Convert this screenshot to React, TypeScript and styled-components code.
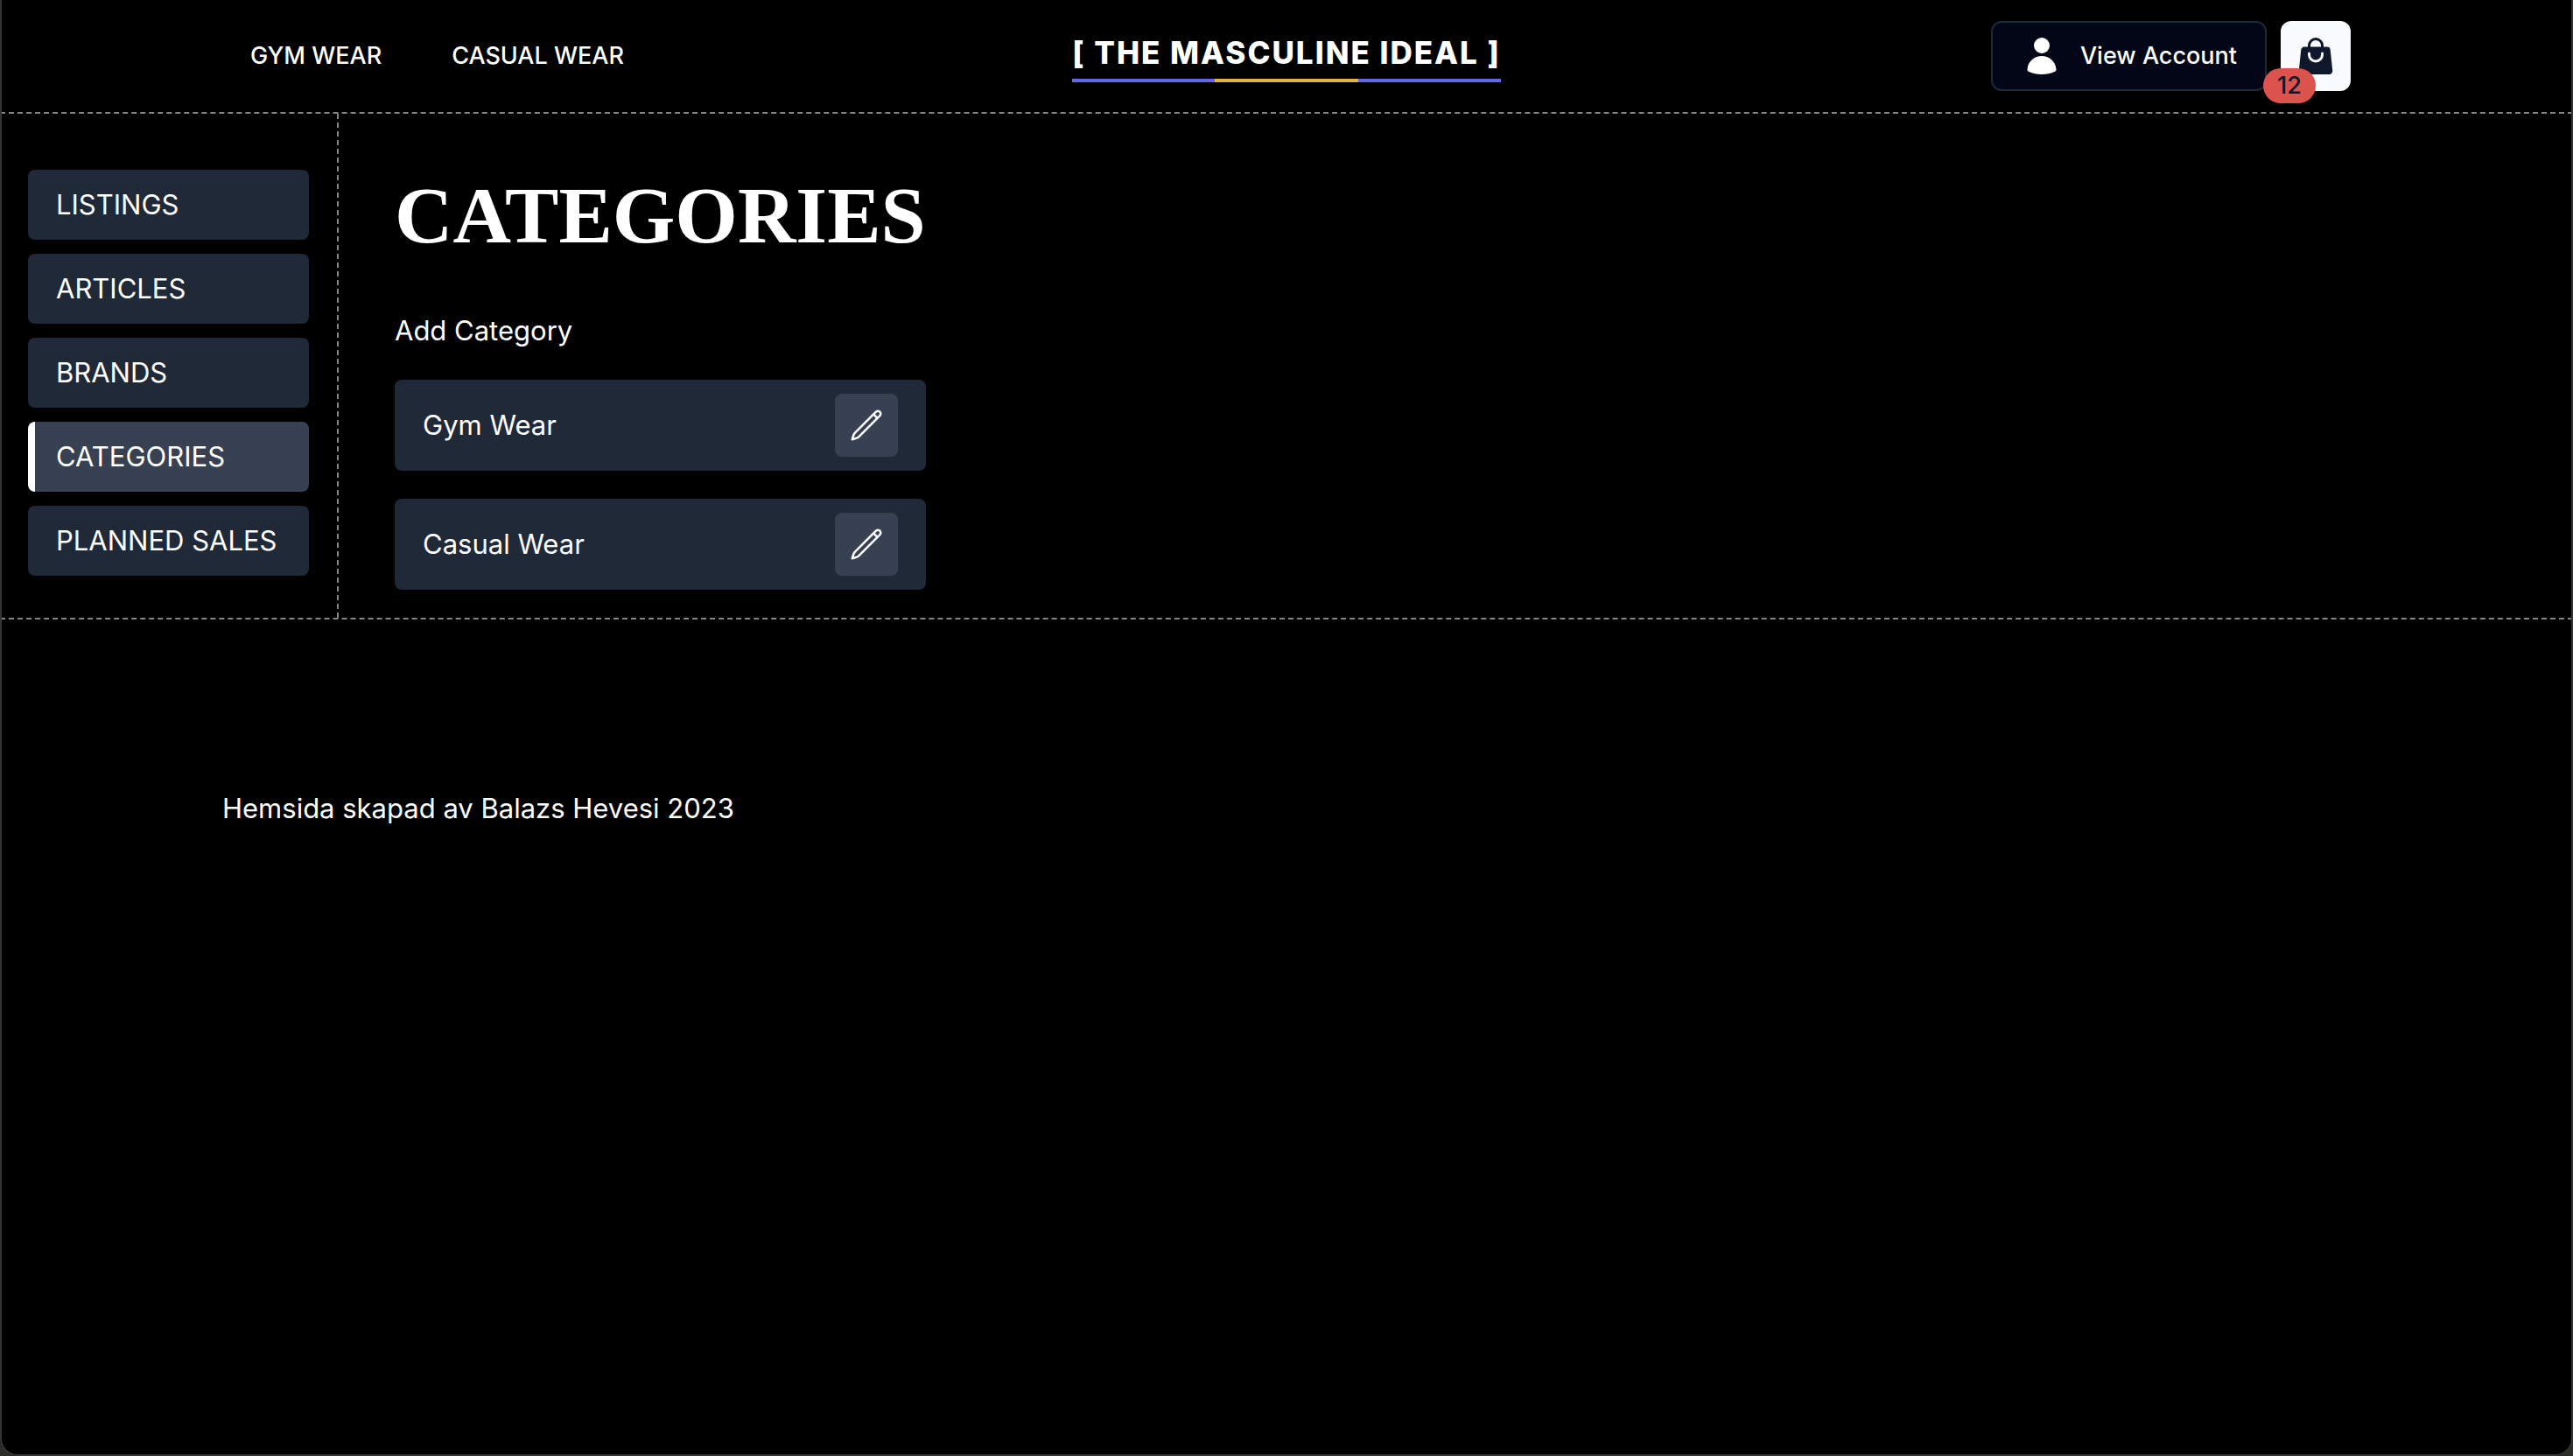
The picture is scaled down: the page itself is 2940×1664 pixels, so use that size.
import React from "react";
import styled, { createGlobalStyle } from "styled-components";

const Global = createGlobalStyle`
  *, *::before, *::after { box-sizing: border-box; }
  html { background: #000; }
  body { margin: 0; color: #fff; font-family: Inter, "Liberation Sans", sans-serif; font-size: 31px; line-height: 48px; }
  h1, p, ul { margin: 0; padding: 0; }
  ul { list-style: none; }
  a { color: inherit; text-decoration: none; }
  button { font: inherit; cursor: pointer; }
`;

const line = "2px dashed #858585";

const WindowFrame = styled.div`
  position: fixed;
  inset: 0;
  border: 2px solid #363636;
  border-top: 0;
  border-radius: 0 0 20px 20px;
  box-shadow: 0 0 0 20px #2c2c28;
  pointer-events: none;
`;

const Header = styled.header`
  border-bottom: ${line};
`;

const Container = styled.div`
  max-width: 2560px;
  margin: 0 auto;
  padding: 0 64px;
`;

const HeaderRow = styled(Container)`
  display: grid;
  grid-template-columns: 1fr auto 1fr;
  align-items: center;
  height: 128px;
`;

const Nav = styled.nav`
  display: flex;
  gap: 16px;
`;

const NavLink = styled.a`
  padding: 16px 32px;
  font-size: 27px;
  font-weight: 500;
`;

const Logo = styled.a`
  display: flex;
  flex-direction: column;
  gap: 4px;
  font-size: 35px;
  line-height: 52px;
  font-weight: 800;
  letter-spacing: 2px;
  white-space: nowrap;
`;

const LogoBar = styled.span`
  height: 4px;
  background: linear-gradient(to right, #6466e9 33.33%, #e3b341 33.33% 66.66%, #6466e9 66.66%);
`;

const Actions = styled.div`
  display: flex;
  justify-content: flex-end;
  gap: 16px;
`;

const AccountButton = styled.button`
  display: flex;
  align-items: center;
  gap: 20px;
  height: 80px;
  padding: 0 32px;
  border: 2px solid #1e293b;
  border-radius: 12px;
  background: #020617;
  color: #fff;
  font-size: 27px;
  font-weight: 500;
`;

const BagButton = styled.button`
  position: relative;
  display: grid;
  place-items: center;
  width: 80px;
  height: 80px;
  padding: 0;
  border: 0;
  border-radius: 12px;
  background: #f8fafc;
  color: #0f172a;
`;

const Badge = styled.span`
  position: absolute;
  left: -20px;
  bottom: -14px;
  padding: 0 16px;
  border-radius: 20px;
  background: #dc524c;
  font-size: 27px;
  line-height: 40px;
  font-weight: 500;
`;

const Dashboard = styled.div`
  display: flex;
  border-bottom: ${line};
`;

const Sidebar = styled.nav`
  padding: 64px 32px 48px;
  border-right: ${line};
`;

const SideList = styled.ul`
  display: grid;
  gap: 16px;
  min-width: 321px;
`;

const SideLink = styled.a<{ $active?: boolean }>`
  display: block;
  padding: 16px 32px 16px ${(p) => (p.$active ? 24 : 32)}px;
  border-left: ${(p) => (p.$active ? "8px solid #fff" : "0")};
  border-radius: 8px;
  background: ${(p) => (p.$active ? "#374152" : "#202938")};
`;

const Main = styled.main`
  display: flex;
  flex-direction: column;
  align-items: stretch;
  padding: 64px 64px 32px;
`;

const Title = styled.h1`
  font: 700 92px/104px "Liberation Serif", serif;
`;

const AddLink = styled.a`
  margin: 56px 0 32px;
`;

const CategoryList = styled.ul`
  display: grid;
  gap: 32px;
`;

const CategoryRow = styled.li`
  display: flex;
  align-items: center;
  justify-content: space-between;
  padding: 16px 32px;
  border-radius: 8px;
  background: #202938;
`;

const EditButton = styled.button`
  display: grid;
  place-items: center;
  width: 72px;
  height: 72px;
  padding: 0;
  border: 0;
  border-radius: 8px;
  background: #374152;
  color: #fff;
`;

const Footer = styled.footer`
  padding: 192px 0;
`;

const PersonIcon = () => (
  <svg width="48" height="48" viewBox="0 0 48 48" fill="currentColor" aria-hidden="true">
    <circle cx="24" cy="12" r="9" />
    <path d="M24 24c9 0 16 6.500 16.500 15.500c0 1.200-.6 2-1.800 2.500C34.500 44 29.500 45 24 45s-10.500-1-14.700-3c-1.200-.5-1.800-1.300-1.800-2.500C8 30.500 15 24 24 24z" />
  </svg>
);

const BagIcon = () => (
  <svg width="48" height="48" viewBox="0 0 24 24" fill="currentColor" aria-hidden="true">
    <path fillRule="evenodd" d="M7.500 6v.75H5.513c-.96 0-1.764.724-1.865 1.679l-1.263 12A1.875 1.875 0 0 0 4.250 22.500h15.500a1.875 1.875 0 0 0 1.865-2.071l-1.263-12a1.875 1.875 0 0 0-1.865-1.679H16.500V6a4.500 4.500 0 1 0-9 0ZM12 3a3 3 0 0 0-3 3v.75h6V6a3 3 0 0 0-3-3Zm-3 8.250a3 3 0 1 0 6 0v-.75a.75.75 0 0 1 1.500 0v.75a4.500 4.500 0 1 1-9 0v-.75a.75.75 0 0 1 1.500 0v.75Z" clipRule="evenodd" />
  </svg>
);

const PencilIcon = () => (
  <svg width="40" height="40" viewBox="0 0 24 24" fill="none" stroke="currentColor" strokeWidth="1.500" strokeLinecap="round" strokeLinejoin="round" aria-hidden="true">
    <path d="m16.862 4.487 1.687-1.688a1.875 1.875 0 1 1 2.652 2.652L6.832 19.820a4.500 4.500 0 0 1-1.897 1.130l-2.685.8.8-2.685a4.500 4.500 0 0 1 1.130-1.897L16.863 4.487Zm0 0L19.500 7.125" />
  </svg>
);

const sections = ["LISTINGS", "ARTICLES", "BRANDS", "CATEGORIES", "PLANNED SALES"];
const categories = ["Gym Wear", "Casual Wear"];

export default function App() {
  return (
    <>
      <Global />
      <Header>
        <HeaderRow>
          <Nav aria-label="Shop">
            <NavLink href="#gym">GYM WEAR</NavLink>
            <NavLink href="#casual">CASUAL WEAR</NavLink>
          </Nav>
          <Logo href="#home">
            [ THE MASCULINE IDEAL ]
            <LogoBar />
          </Logo>
          <Actions>
            <AccountButton>
              <PersonIcon />
              View Account
            </AccountButton>
            <BagButton aria-label="Shopping bag">
              <BagIcon />
              <Badge>12</Badge>
            </BagButton>
          </Actions>
        </HeaderRow>
      </Header>
      <Dashboard>
        <Sidebar aria-label="Admin">
          <SideList>
            {sections.map((name) => (
              <li key={name}>
                <SideLink href={"#" + name.toLowerCase()} $active={name === "CATEGORIES"}>{name}</SideLink>
              </li>
            ))}
          </SideList>
        </Sidebar>
        <Main>
          <Title>CATEGORIES</Title>
          <AddLink href="#add">Add Category</AddLink>
          <CategoryList>
            {categories.map((name) => (
              <CategoryRow key={name}>
                {name}
                <EditButton aria-label={"Edit " + name}>
                  <PencilIcon />
                </EditButton>
              </CategoryRow>
            ))}
          </CategoryList>
        </Main>
      </Dashboard>
      <Footer>
        <Container>
          <p>Hemsida skapad av Balazs Hevesi 2023</p>
        </Container>
      </Footer>
      <WindowFrame />
    </>
  );
}
